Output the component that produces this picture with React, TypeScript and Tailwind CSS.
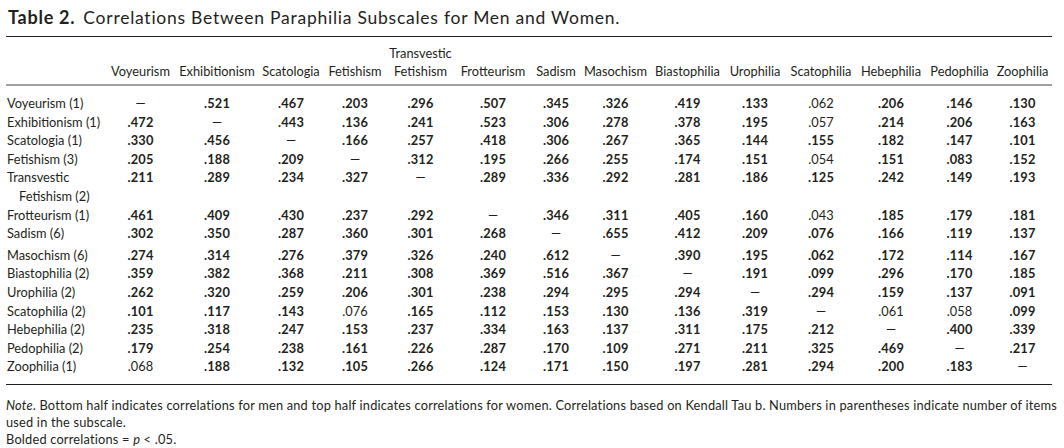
const COLS = [
  'Voyeurism',
  'Exhibitionism',
  'Scatologia',
  'Fetishism',
  'Transvestic\nFetishism',
  'Frotteurism',
  'Sadism',
  'Masochism',
  'Biastophilia',
  'Urophilia',
  'Scatophilia',
  'Hebephilia',
  'Pedophilia',
  'Zoophilia',
]

// "n" prefix = not significant (regular weight)
const ROWS: { label: string[]; vals: string[]; gap?: boolean }[] = [
  { label: ['Voyeurism (1)'], vals: ['—', '.521', '.467', '.203', '.296', '.507', '.345', '.326', '.419', '.133', 'n.062', '.206', '.146', '.130'] },
  { label: ['Exhibitionism (1)'], vals: ['.472', '—', '.443', '.136', '.241', '.523', '.306', '.278', '.378', '.195', 'n.057', '.214', '.206', '.163'] },
  { label: ['Scatologia (1)'], vals: ['.330', '.456', '—', '.166', '.257', '.418', '.306', '.267', '.365', '.144', '.155', '.182', '.147', '.101'] },
  { label: ['Fetishism (3)'], vals: ['.205', '.188', '.209', '—', '.312', '.195', '.266', '.255', '.174', '.151', 'n.054', '.151', '.083', '.152'] },
  { label: ['Transvestic', 'Fetishism (2)'], vals: ['.211', '.289', '.234', '.327', '—', '.289', '.336', '.292', '.281', '.186', '.125', '.242', '.149', '.193'] },
  { label: ['Frotteurism (1)'], vals: ['.461', '.409', '.430', '.237', '.292', '—', '.346', '.311', '.405', '.160', 'n.043', '.185', '.179', '.181'] },
  { label: ['Sadism (6)'], vals: ['.302', '.350', '.287', '.360', '.301', '.268', '—', '.655', '.412', '.209', '.076', '.166', '.119', '.137'] },
  { label: ['Masochism (6)'], gap: true, vals: ['.274', '.314', '.276', '.379', '.326', '.240', '.612', '—', '.390', '.195', '.062', '.172', '.114', '.167'] },
  { label: ['Biastophilia (2)'], vals: ['.359', '.382', '.368', '.211', '.308', '.369', '.516', '.367', '—', '.191', '.099', '.296', '.170', '.185'] },
  { label: ['Urophilia (2)'], vals: ['.262', '.320', '.259', '.206', '.301', '.238', '.294', '.295', '.294', '—', '.294', '.159', '.137', '.091'] },
  { label: ['Scatophilia (2)'], vals: ['.101', '.117', '.143', 'n.076', '.165', '.112', '.153', '.130', '.136', '.319', '—', 'n.061', 'n.058', '.099'] },
  { label: ['Hebephilia (2)'], vals: ['.235', '.318', '.247', '.153', '.237', '.334', '.163', '.137', '.311', '.175', '.212', '—', '.400', '.339'] },
  { label: ['Pedophilia (2)'], vals: ['.179', '.254', '.238', '.161', '.226', '.287', '.170', '.109', '.271', '.211', '.325', '.469', '—', '.217'] },
  { label: ['Zoophilia (1)'], vals: ['n.068', '.188', '.132', '.105', '.266', '.124', '.171', '.150', '.197', '.281', '.294', '.200', '.183', '—'] },
]

const GRID =
  'grid grid-cols-[100px_69px_84px_64px_64px_67px_78px_48px_71px_73px_62px_70px_70px_67px_59px]'

function Cell({ v }: { v: string }) {
  if (v === '—') return <div className="flex justify-center">—</div>
  const light = v.startsWith('n')
  return (
    <div className={light ? 'flex justify-center font-normal' : 'flex justify-center font-bold tracking-[0.2px]'}>
      {light ? v.slice(1) : v}
    </div>
  )
}

export default function App() {
  return (
    <div className="h-[448px] w-[1064px] overflow-hidden bg-white text-[#231f20] font-['Lato','Liberation_Sans',sans-serif]">
      <div className="ml-[6px] w-[1046px]">
        <h1 className="pl-[2px] pt-[6px] text-[17.5px] leading-[22px] whitespace-nowrap tracking-[0.75px]">
          <span className="font-bold text-[18px]">Table 2.</span>
          <span className="ml-[8px]">Correlations Between Paraphilia Subscales for Men and Women.</span>
        </h1>

        <div className="mt-[7px] h-px bg-[#231f20]" />

        {/* header */}
        <div className={`${GRID} h-[47px] items-end pb-[4px] text-[12.8px] leading-[18px]`}>
          <div />
          {COLS.map((c) => (
            <div key={c} className="flex flex-col items-center whitespace-nowrap">
              {c.split('\n').map((l) => (
                <span key={l}>{l}</span>
              ))}
            </div>
          ))}
        </div>
        <div className="h-[2px] bg-[#a0a0a0]" />

        {/* body */}
        <div className="pt-[8px] pb-[8px] text-[12.8px] leading-[18.6px]">
          {ROWS.map((r) => (
            <div key={r.label.join(' ')} className={`${GRID} ${r.gap ? 'mt-[3px]' : ''}`}>
              <div className="pl-px whitespace-nowrap">
                {r.label.map((l, i) => (
                  <div key={l} className={i > 0 ? 'pl-[12px]' : ''}>
                    {l}
                  </div>
                ))}
              </div>
              {r.vals.map((v, i) => (
                <Cell key={i} v={v} />
              ))}
            </div>
          ))}
        </div>
        <div className="h-px bg-[#231f20]" />

        {/* note */}
        <div className="mt-[12px] text-[12.8px] leading-[17px] whitespace-nowrap tracking-[0.2px]">
          <div>
            <span className="italic">Note</span>. Bottom half indicates correlations for men and top half indicates
            correlations for women. Correlations based on Kendall Tau b. Numbers in parentheses indicate number of items
          </div>
          <div>used in the subscale.</div>
          <div>
            Bolded correlations = <span className="italic">p</span> &lt; .05.
          </div>
        </div>
      </div>
    </div>
  )
}
